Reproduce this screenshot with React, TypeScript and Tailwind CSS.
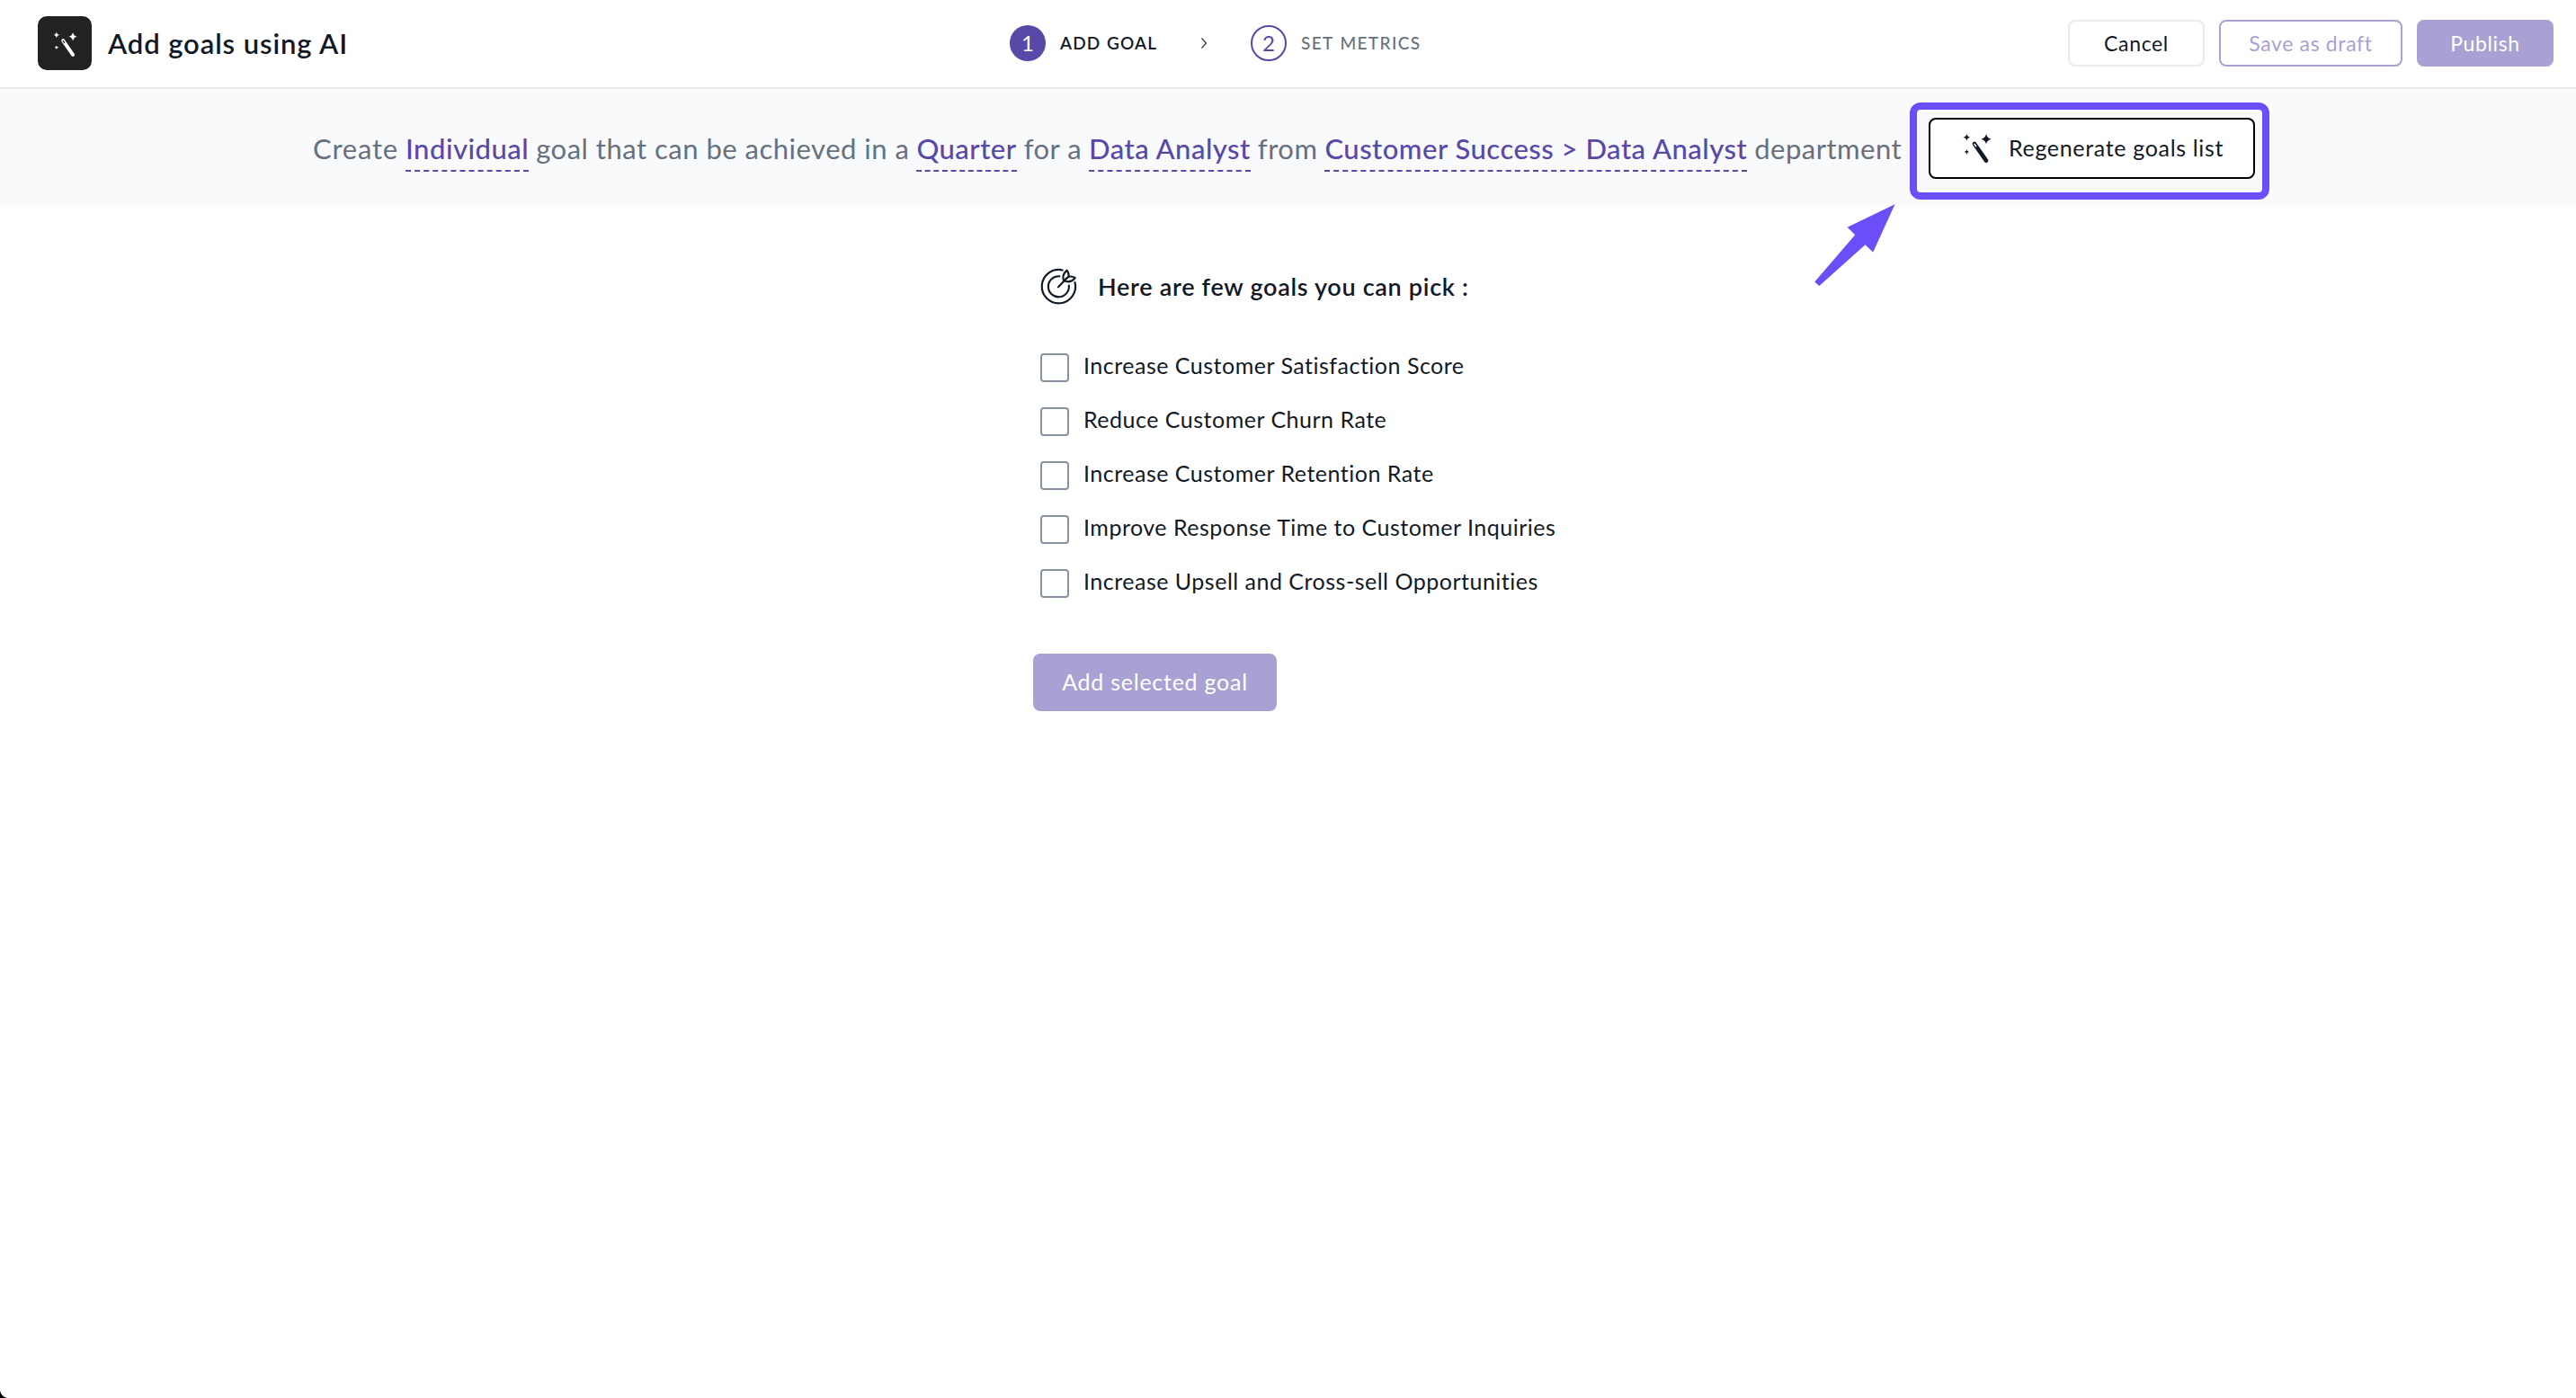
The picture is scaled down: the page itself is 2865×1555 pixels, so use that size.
import React from "react";

interface IconProps {
  className?: string;
}

const goals = [
  "Increase Customer Satisfaction Score",
  "Reduce Customer Churn Rate",
  "Increase Customer Retention Rate",
  "Improve Response Time to Customer Inquiries",
  "Increase Upsell and Cross-sell Opportunities",
];

const WandIcon: React.FC<IconProps> = ({ className }) => (
  <svg viewBox="0 0 132 132" fill="currentColor" className={className}>
    <path d="M93 21 Q96 35 110 38 Q96 41 93 55 Q90 41 76 38 Q90 35 93 21Z" />
    <path d="M28 20 Q29.5 30.5 40 32 Q29.5 33.5 28 44 Q26.5 33.5 16 32 Q26.5 30.5 28 20Z" />
    <path d="M28 73 Q29 80 36 81 Q29 82 28 89 Q27 82 20 81 Q27 80 28 73Z" />
    <path d="M54 54 L93 110" stroke="currentColor" strokeWidth="14" strokeLinecap="round" />
    <path d="M54 55 L59 62" className="stroke-[var(--wand-tip)]" strokeWidth="4.5" strokeLinecap="round" />
  </svg>
);

const TargetIcon: React.FC<IconProps> = ({ className }) => (
  <svg
    viewBox="0 0 162 162"
    fill="none"
    stroke="currentColor"
    strokeWidth="6.5"
    strokeLinecap="round"
    strokeLinejoin="round"
    className={className}
  >
    <path d="M95 25.5 A56 56 0 1 0 136.500 66" />
    <path d="M85 46 A34.500 34.500 0 1 0 116.500 77" />
    <path d="M81 82 L110 52" />
    <path d="M99 61 Q92 42 110 26 Q117 36 116 47 Q127 45 137 51 Q123 70 99 61Z" />
    <path d="M99 61 L116 47" />
  </svg>
);

const Field: React.FC<{ children: React.ReactNode }> = ({ children }) => (
  <span className="border-b-2 border-dashed border-[#5849a9] pb-1.5 font-medium text-[#5849a9]">{children}</span>
);

const Header = () => (
  <header className="flex h-[99px] items-center border-b-2 border-[#e9ebee] pr-[25px] pb-px pl-[42px]">
    <div className="flex w-[1081px] items-center">
      <div className="flex size-[60px] items-center justify-center rounded-[10px] bg-[#222222] text-white [--wand-tip:#222222]">
        <WandIcon className="ml-0.5 size-[37px]" />
      </div>
      <h1 className="ml-[18px] text-[31px] font-semibold tracking-[0.9px]">Add goals using AI</h1>
    </div>

    {/* Steps */}
    <div className="flex items-center text-[19px] [word-spacing:1px]">
      <span className="flex size-10 items-center justify-center rounded-full bg-[#5849a9] text-2xl text-white">1</span>
      <span className="ml-4 w-[140px] font-semibold tracking-[1.1px]">ADD GOAL</span>
      <svg viewBox="0 0 8 14" fill="none" stroke="#3f4857" strokeWidth="1.5" className="ml-4 h-3.5 w-2">
        <path d="M1.500 1.500 L6.500 7 L1.500 12.500" />
      </svg>
      <span className="ml-[48px] flex size-10 items-center justify-center rounded-full border-2 border-[#5849a9] text-2xl text-[#5849a9]">
        2
      </span>
      <span className="ml-4 font-medium tracking-[1.4px] text-[#667080]">SET METRICS</span>
    </div>

    {/* Actions */}
    <div className="ml-auto flex gap-4 text-[23px] tracking-[0.65px]">
      <button className="h-[52px] w-[152px] rounded-lg border-2 border-[#ebebed]">Cancel</button>
      <button className="h-[52px] w-[204px] rounded-lg border-2 border-[#a9a1d4] text-[#a9a1d4]">Save as draft</button>
      <button className="h-[52px] w-[152px] rounded-lg bg-[#a9a1d4] text-white">Publish</button>
    </div>
  </header>
);

const PromptBar = () => (
  <section className="flex h-[132px] items-center bg-[#f8fafc] pl-[348px]">
    <div className="mt-2 flex w-[1765px] items-baseline gap-2 text-[31px] leading-9 tracking-[0.5px] whitespace-nowrap text-[#667080]">
      <span className="tracking-[0.8px]">Create</span>
      <Field>Individual</Field>
      <span>goal that can be achieved in a</span>
      <Field>Quarter</Field>
      <span>for a</span>
      <Field>Data Analyst</Field>
      <span>from</span>
      <Field>Customer Success &gt; Data Analyst</Field>
      <span>department</span>
    </div>

    <div className="relative ml-8">
      <button className="flex h-[68px] w-[363px] items-center rounded-lg border-2 border-black bg-white pl-[31px] text-[25px] tracking-[0.67px] whitespace-nowrap [--wand-tip:#ffffff]">
        <WandIcon className="-mt-0.5 size-11" />
        <span className="ml-3">Regenerate goals list</span>
      </button>

      {/* Highlight frame and arrow */}
      <div className="pointer-events-none absolute -top-[17px] -right-4 -bottom-[23px] -left-[21px] rounded-xl border-8 border-[#6b4ef8]" />
      <svg viewBox="0 0 110 95" fill="#6b4ef8" className="absolute top-[94px] -left-[135px] h-[95px] w-[110px]">
        <path d="M97.500 2.300 L73.200 55.500 L64.500 47.300 L13.300 93 L8.200 88.500 L53.200 36.300 L44.600 27.700Z" />
      </svg>
    </div>
  </section>
);

const GoalPicker = () => (
  <main className="flex flex-col items-start pt-[61px] pl-[1150px]">
    <div className="flex h-[54px] items-center">
      <TargetIcon className="size-[54px]" />
      <h2 className="ml-[17px] text-[27px] font-semibold tracking-[0.7px]">Here are few goals you can pick :</h2>
    </div>

    <ul className="mt-[47px] ml-[7px] flex flex-col gap-7">
      {goals.map((goal) => (
        <li key={goal} className="flex h-8 items-center">
          <span className="size-8 rounded-[4px] border-2 border-[#8792a2] bg-white" />
          <span className="-mt-1 ml-4 text-[25px] tracking-[0.5px]">{goal}</span>
        </li>
      ))}
    </ul>

    <button className="mt-[62px] -ml-px h-16 w-[271px] rounded-lg bg-[#a9a1d4] text-[25px] tracking-[0.75px] text-white">
      Add selected goal
    </button>
  </main>
);

const App: React.FC = () => (
  <div className="relative min-h-screen overflow-hidden bg-white font-['Lato',sans-serif] text-[#121926]">
    <Header />
    <PromptBar />
    <GoalPicker />

    {/* Rounded window corner */}
    <svg viewBox="0 0 8 8" className="absolute bottom-0 left-0 size-2">
      <path d="M0 0 Q1.500 6.500 8 8 L0 8Z" />
    </svg>
  </div>
);

export default App;
